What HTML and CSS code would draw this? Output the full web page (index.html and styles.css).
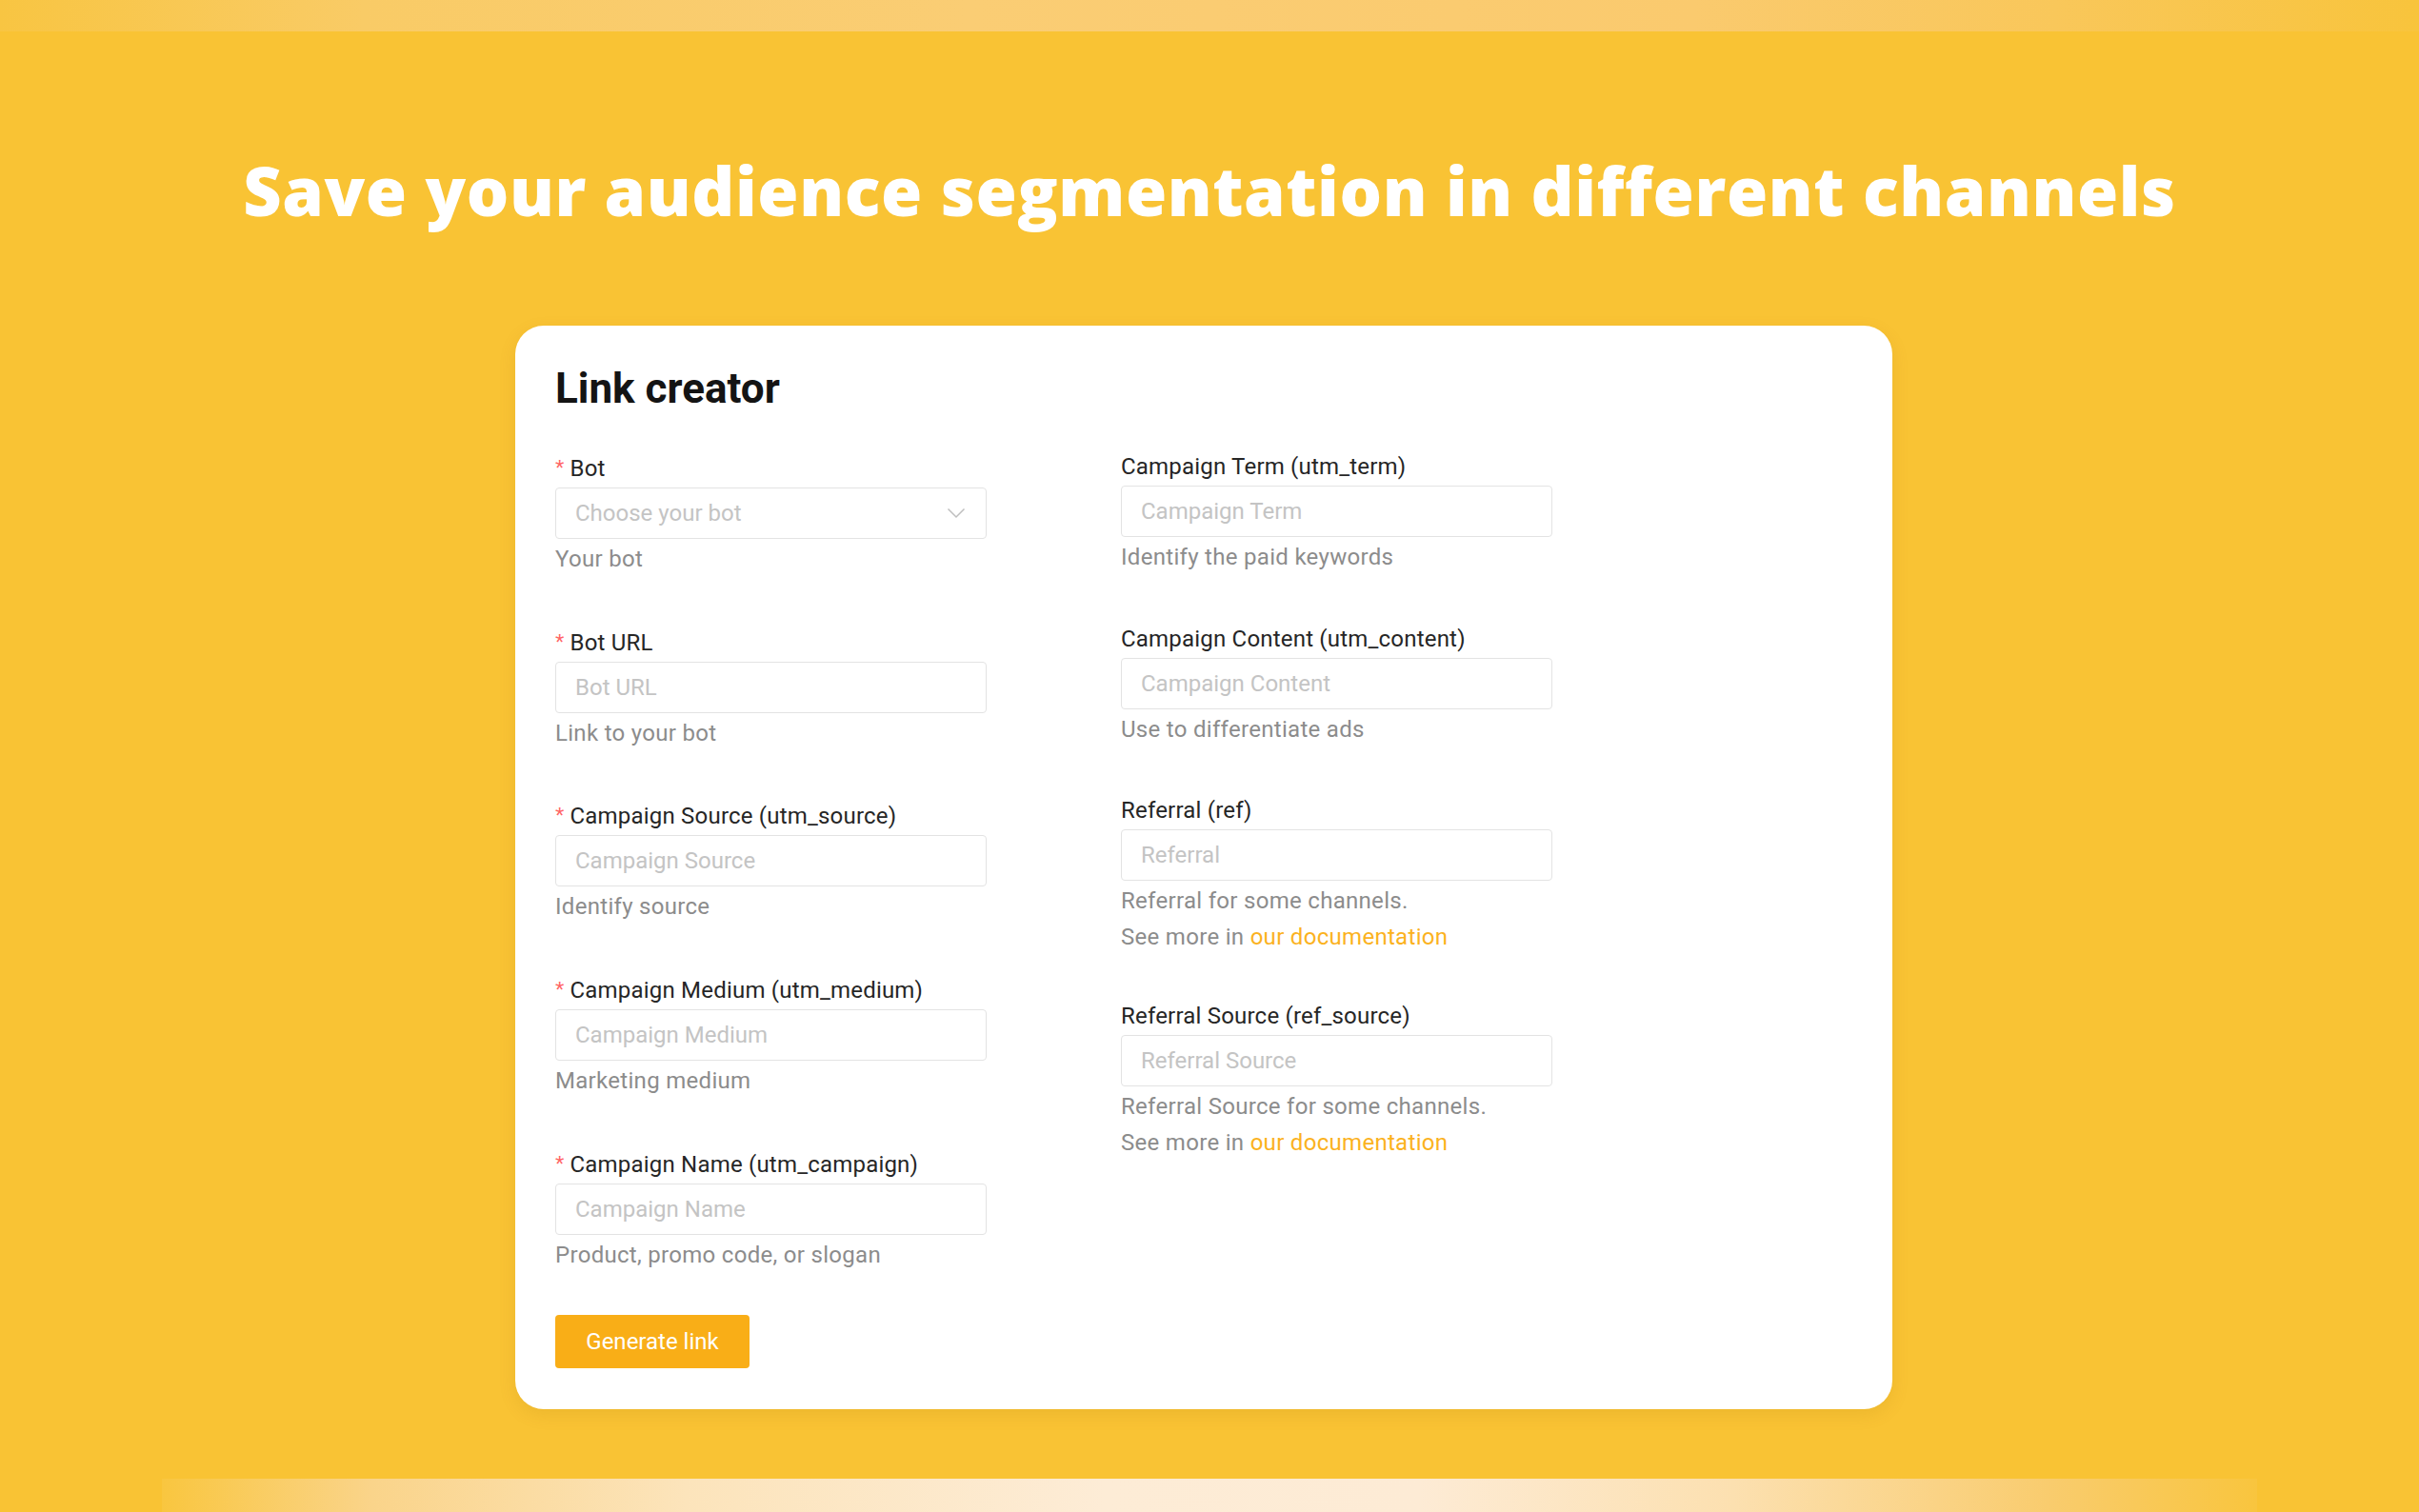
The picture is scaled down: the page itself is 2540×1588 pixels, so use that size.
FILE: index.html
```html
<!DOCTYPE html>
<html lang="en">
<head>
<meta charset="utf-8">
<title>Link creator</title>
<link rel="stylesheet" href="styles.css">
</head>
<body>
<div class="strip-top"></div>
<h1 class="hero-title">Save your audience segmentation in different channels</h1>
<div class="card-wrap">
  <div class="card">
    <h2 class="card-title">Link creator</h2>
    <div class="form-grid">
      <div class="col left">
        <div class="field">
          <div class="label"><span class="req">*</span>Bot</div>
          <div class="input select"><span class="ph">Choose your bot</span>
            <svg class="chev" width="20" height="12" viewBox="0 0 20 12"><path d="M1.5 1.5 L10 10 L18.5 1.5" fill="none" stroke="#bfbfbf" stroke-width="1.5"/></svg>
          </div>
          <div class="help">Your bot</div>
        </div>
        <div class="field">
          <div class="label"><span class="req">*</span>Bot URL</div>
          <div class="input"><span class="ph">Bot URL</span></div>
          <div class="help">Link to your bot</div>
        </div>
        <div class="field">
          <div class="label"><span class="req">*</span>Campaign Source (utm_source)</div>
          <div class="input"><span class="ph">Campaign Source</span></div>
          <div class="help">Identify source</div>
        </div>
        <div class="field">
          <div class="label"><span class="req">*</span>Campaign Medium (utm_medium)</div>
          <div class="input"><span class="ph">Campaign Medium</span></div>
          <div class="help">Marketing medium</div>
        </div>
        <div class="field">
          <div class="label"><span class="req">*</span>Campaign Name (utm_campaign)</div>
          <div class="input"><span class="ph">Campaign Name</span></div>
          <div class="help">Product, promo code, or slogan</div>
        </div>
      </div>
      <div class="col right">
        <div class="field">
          <div class="label">Campaign Term (utm_term)</div>
          <div class="input"><span class="ph">Campaign Term</span></div>
          <div class="help">Identify the paid keywords</div>
        </div>
        <div class="field">
          <div class="label">Campaign Content (utm_content)</div>
          <div class="input"><span class="ph">Campaign Content</span></div>
          <div class="help">Use to differentiate ads</div>
        </div>
        <div class="field multi">
          <div class="label">Referral (ref)</div>
          <div class="input"><span class="ph">Referral</span></div>
          <div class="help">Referral for some channels.<br>See more in <a class="doc" href="#">our documentation</a></div>
        </div>
        <div class="field multi">
          <div class="label">Referral Source (ref_source)</div>
          <div class="input"><span class="ph">Referral Source</span></div>
          <div class="help">Referral Source for some channels.<br>See more in <a class="doc" href="#">our documentation</a></div>
        </div>
      </div>
    </div>
    <button class="btn">Generate link</button>
  </div>
</div>
<div class="strip-bottom"></div>
</body>
</html>
```
FILE: styles.css
```css
html, body {
  margin: 0;
  padding: 0;
}
body {
  background: #f9c334;
  min-height: 1588px;
  display: flex;
  flex-direction: column;
  font-family: Roboto, "Liberation Sans", sans-serif;
}
.strip-top {
  height: 33px;
  background: linear-gradient(90deg, #f8c542 0%, #f9cb66 15%, #facd74 40%, #faca6e 70%, #f9c75a 85%, #f8c43c 100%);
}
.hero-title {
  margin: 125px 0 0;
  text-align: center;
  color: #ffffff;
  font-family: "Open Sans", Lato, sans-serif;
  font-weight: 800;
  font-size: 70px;
  line-height: 84px;
  letter-spacing: 0.6px;
}
.card-wrap {
  display: flex;
  justify-content: center;
  padding-right: 12px;
  margin-top: 100px;
}
.card {
  width: 1446px;
  box-sizing: border-box;
  background: #ffffff;
  border-radius: 30px;
  padding: 40px 42px 43px;
  box-shadow: 0 6px 18px rgba(150, 100, 0, 0.12);
}
.card-title {
  margin: 0 0 38px;
  font-size: 44px;
  line-height: 52px;
  font-weight: 700;
  color: #141414;
}
.form-grid {
  display: grid;
  grid-template-columns: 453px 453px;
  column-gap: 141px;
  align-items: start;
}
.col {
  display: flex;
  flex-direction: column;
}
.right {
  margin-top: -2px;
}
.field {
  margin-bottom: 48.7px;
}
.right .field {
  margin-bottom: 46.6px;
}
.right .field.multi {
  margin-bottom: 43.5px;
}
.label {
  height: 40px;
  line-height: 40px;
  font-size: 24px;
  letter-spacing: 0.2px;
  color: #262626;
}
.req {
  color: #ff6464;
  margin-right: 6px;
  font-family: "Liberation Sans", sans-serif;
  font-size: 24px;
}
.input {
  height: 54px;
  box-sizing: border-box;
  border: 1.5px solid #e3e3e3;
  border-radius: 4px;
  padding: 0 20px;
  display: flex;
  align-items: center;
  justify-content: space-between;
  background: #ffffff;
}
.ph {
  font-size: 24px;
  color: #c4c4c4;
}
.chev {
  margin-right: 1px;
}
.help {
  padding-top: 2px;
  line-height: 38px;
  font-size: 24px;
  letter-spacing: 0.3px;
  color: #8c8c8c;
}
.doc {
  color: #fbb21e;
  text-decoration: none;
}
.btn {
  margin-top: -4px;
  width: 204px;
  height: 56px;
  border: none;
  border-radius: 4px;
  background: #f9ae17;
  color: #ffffff;
  font-family: Roboto, "Liberation Sans", sans-serif;
  font-size: 24px;
  padding: 0;
  cursor: pointer;
}
.strip-bottom {
  margin: auto 170px 0;
  height: 35px;
  background: linear-gradient(90deg, #f9c63f 0%, #fad48a 10%, #fce4bb 25%, #fdecd6 45%, #fdebd5 60%, #fce0b0 75%, #f9cc6e 90%, #f9c53e 100%);
}
```
